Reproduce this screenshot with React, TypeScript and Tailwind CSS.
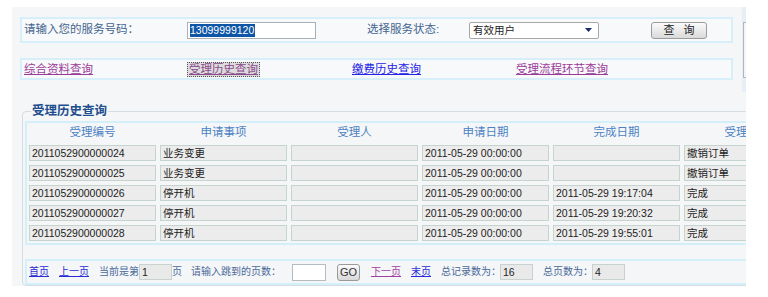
import React from "react";

const rows = [
  ["2011052900000024", "业务变更", "", "2011-05-29 00:00:00", "", "撤销订单"],
  ["2011052900000025", "业务变更", "", "2011-05-29 00:00:00", "", "撤销订单"],
  ["2011052900000026", "停开机", "", "2011-05-29 00:00:00", "2011-05-29 19:17:04", "完成"],
  ["2011052900000027", "停开机", "", "2011-05-29 00:00:00", "2011-05-29 19:20:32", "完成"],
  ["2011052900000028", "停开机", "", "2011-05-29 00:00:00", "2011-05-29 19:55:01", "完成"],
];

const headers = ["受理编号", "申请事项", "受理人", "申请日期", "完成日期", "受理状态"];

export default function App() {
  return (
    <div
      className="w-[768px] h-[297px] bg-white overflow-hidden"
      style={{ fontFamily: '"Liberation Sans", "Noto Sans CJK SC", sans-serif' }}
    >
      <div className="ml-[12px] pt-[7px]">
        <div className="w-[734px] h-[279px] bg-[#f5f6f8] overflow-hidden">
          {/* top area */}
          <div className="flex h-[85px]">
            <div className="w-[730px] pt-[10px] pl-[8px]">
              <div className="w-[713px] h-[26px] border-2 border-[#d6effa] bg-[#f8f9fb] flex items-center pl-[2px] text-[11.5px] text-[#43658f]">
                <div className="w-[163px] leading-none">请输入您的服务号码：</div>
                <div className="w-[180px]">
                  <div className="w-[129px] h-[17px] border border-[#a9b0b6] bg-white flex items-center pl-[2px]">
                    <span className="bg-[#0d55a6] text-white text-[10.5px] leading-[13px] pr-[1px]">13099999120</span>
                  </div>
                </div>
                <div className="w-[102px] leading-none">选择服务状态:</div>
                <div className="w-[182px]">
                  <div className="w-[130px] h-[17px] border border-[#a8a8a8] rounded-[2px] bg-white flex items-center justify-between pl-[3px] pr-[6px]">
                    <span className="text-[10.5px] text-[#222] leading-none">有效用户</span>
                    <svg width="7" height="4" viewBox="0 0 7 4">
                      <polygon points="0,0 7,0 3.5,4" fill="#1c2a6e" />
                    </svg>
                  </div>
                </div>
                <div className="w-[56px] h-[17px] border border-[#9c9c9c] rounded-[3px] bg-gradient-to-b from-[#fbfbfb] to-[#dadada] flex items-center justify-center text-[11px] text-[#222] leading-none tracking-[3px] pl-[3px]">
                  查 询
                </div>
              </div>
              <div className="mt-[15px] w-[713px] h-[22px] border-2 border-[#d6effa] bg-[#f8f9fb] flex items-center pl-[2px] text-[11.5px] leading-[14px]">
                <div className="w-[164px]">
                  <span className="text-[#9b3b98] underline">综合资料查询</span>
                </div>
                <div className="w-[164px] -ml-[1px] pl-0">
                  <span className="inline-block border border-dotted border-[#555] bg-[#dcdcdc] px-[1px] text-[#8c4a8c] underline leading-[13px]">受理历史查询</span>
                </div>
                <div className="w-[164px] ml-[1px]">
                  <span className="text-[#2424e6] underline">缴费历史查询</span>
                </div>
                <div className="w-[164px]">
                  <span className="text-[#9b3b98] underline">受理流程环节查询</span>
                </div>
              </div>
            </div>
            <div className="w-[4px] bg-[#e7eef8] pt-[15px]">
              <div className="ml-[1px] h-[56px] border border-r-0 border-[#aeb6be] bg-[#f4f4f4]" />
            </div>
          </div>

          {/* fieldset */}
          <fieldset className="mt-[12px] ml-[10px] w-[760px] border border-[#d5dce2] rounded-[4px] p-0">
            <legend className="ml-[8px] px-[1px] text-[12.5px] font-bold text-[#1f4e8f] leading-[14px]">受理历史查询</legend>
            <div className="mt-[3px] ml-[2px] border-2 border-r-0 border-[#d2effa] p-[2px]">
              <div className="grid grid-cols-[127px_127px_127px_127px_127px_127px] gap-[4px]">
                {headers.map((h) => (
                  <div key={h} className="h-[16px] flex items-center justify-center text-[11.5px] text-[#4c82c3] leading-none">
                    {h}
                  </div>
                ))}
                {rows.map((r, i) =>
                  r.map((c, j) => (
                    <div
                      key={i + "-" + j}
                      className="h-[16px] border border-[#c6d4cf] bg-[#ececec] text-[10.5px] text-[#1c1c1c] px-[2px] leading-[14px] whitespace-nowrap overflow-hidden"
                    >
                      {c}
                    </div>
                  ))
                )}
              </div>
            </div>
            <div className="mt-[14px] ml-[2px] h-[26px] border-2 border-r-0 border-[#d2effa] flex items-center pl-[2px] text-[10px] text-[#4a6a99] leading-none whitespace-nowrap">
              <span className="w-[30px]"><span className="text-[#2a2ad6] underline">首页</span></span>
              <span className="w-[40px]"><span className="text-[#2a2ad6] underline">上一页</span></span>
              <span className="w-[40px]">当前是第</span>
              <div className="w-[33px] h-[16px] border border-[#c8d2cf] bg-[#e9e9e9] text-[10.5px] text-[#222] pl-[2px] flex items-center">1</div>
              <span className="w-[19px]">页</span>
              <span className="w-[101px]">请输入跳到的页数：</span>
              <div className="w-[34px] h-[17px] border border-[#b4bcc2] bg-white" />
              <span className="w-[11px]" />
              <div className="w-[23px] h-[17px] border border-[#9a9a9a] rounded-[3px] bg-gradient-to-b from-[#fbfbfb] to-[#d8d8d8] flex items-center justify-center text-[11px] text-[#333]">GO</div>
              <span className="w-[11px]" />
              <span className="w-[40px]"><span className="text-[#a13ea1] underline">下一页</span></span>
              <span className="w-[30px]"><span className="text-[#2a2ad6] underline">末页</span></span>
              <span className="w-[59px]">总记录数为：</span>
              <div className="w-[33px] h-[16px] border border-[#c8d2cf] bg-[#e9e9e9] text-[10.5px] text-[#222] pl-[2px] flex items-center">16</div>
              <span className="w-[10px]" />
              <span className="w-[49px]">总页数为：</span>
              <div className="w-[33px] h-[16px] border border-[#c8d2cf] bg-[#e9e9e9] text-[10.5px] text-[#222] pl-[2px] flex items-center">4</div>
            </div>
          </fieldset>
        </div>
      </div>
    </div>
  );
}
